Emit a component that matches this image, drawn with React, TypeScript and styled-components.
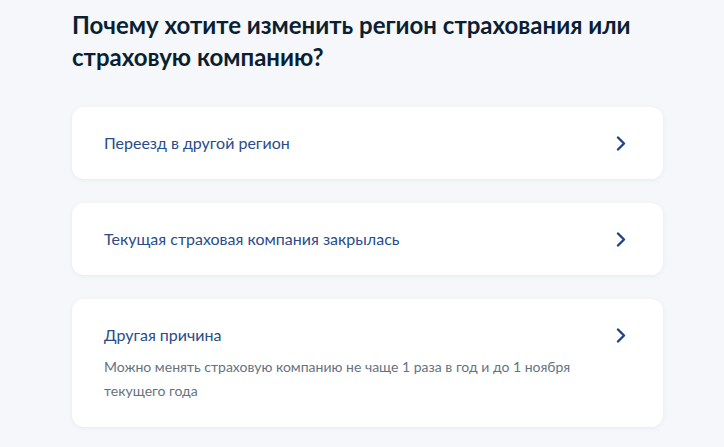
import React from "react";
import styled, { createGlobalStyle } from "styled-components";

const Global = createGlobalStyle`
  html, body {
    margin: 0;
    padding: 0;
    background: #f5f7fa;
  }
  body {
    font-family: Lato, "Noto Sans", sans-serif;
    -webkit-font-smoothing: antialiased;
  }
`;

const Page = styled.div`
  width: 724px;
  height: 447px;
  box-sizing: border-box;
  padding: 9px 61px 0 72px;
  overflow: hidden;
  background: #f5f7fa;
`;

const Title = styled.h1`
  margin: 0 0 34px;
  font-family: Lato, sans-serif;
  font-weight: 700;
  font-size: 24px;
  line-height: 32px;
  color: #0b1f33;
`;

const List = styled.div`
  display: flex;
  flex-direction: column;
  gap: 24px;
`;

const Card = styled.button`
  display: flex;
  align-items: flex-start;
  justify-content: space-between;
  gap: 16px;
  width: 100%;
  box-sizing: border-box;
  padding: 24px 30px 24px 32px;
  border: none;
  border-radius: 12px;
  background: #ffffff;
  box-shadow: 0 1px 4px rgba(160, 175, 200, 0.18);
  text-align: left;
  cursor: pointer;
  font-family: Lato, sans-serif;
`;

const Body = styled.div`
  display: flex;
  flex-direction: column;
  gap: 8px;
`;

const Label = styled.span`
  font-size: 16px;
  line-height: 24px;
  color: #2a4c8a;
`;

const Hint = styled.span`
  font-size: 14px;
  line-height: 24px;
  color: #66727f;
  max-width: 480px;
`;

const Arrow = styled.span`
  display: flex;
  align-items: center;
  justify-content: center;
  width: 24px;
  height: 24px;
  flex-shrink: 0;
  color: #1f418f;
`;

const Chevron = () => (
  <svg width="10" height="15" viewBox="0 0 10 15" fill="none">
    <path
      d="M2 1.5L8 7.5L2 13.5"
      stroke="currentColor"
      strokeWidth="2.4"
      strokeLinecap="round"
      strokeLinejoin="round"
    />
  </svg>
);

const items: { label: string; hint?: string }[] = [
  { label: "Переезд в другой регион" },
  { label: "Текущая страховая компания закрылась" },
  {
    label: "Другая причина",
    hint: "Можно менять страховую компанию не чаще 1 раза в год и до 1 ноября текущего года",
  },
];

export default function App() {
  return (
    <>
      <Global />
      <Page>
        <Title>
          Почему хотите изменить регион страхования или страховую компанию?
        </Title>
        <List>
          {items.map((it) => (
            <Card key={it.label}>
              <Body>
                <Label>{it.label}</Label>
                {it.hint && <Hint>{it.hint}</Hint>}
              </Body>
              <Arrow>
                <Chevron />
              </Arrow>
            </Card>
          ))}
        </List>
      </Page>
    </>
  );
}
